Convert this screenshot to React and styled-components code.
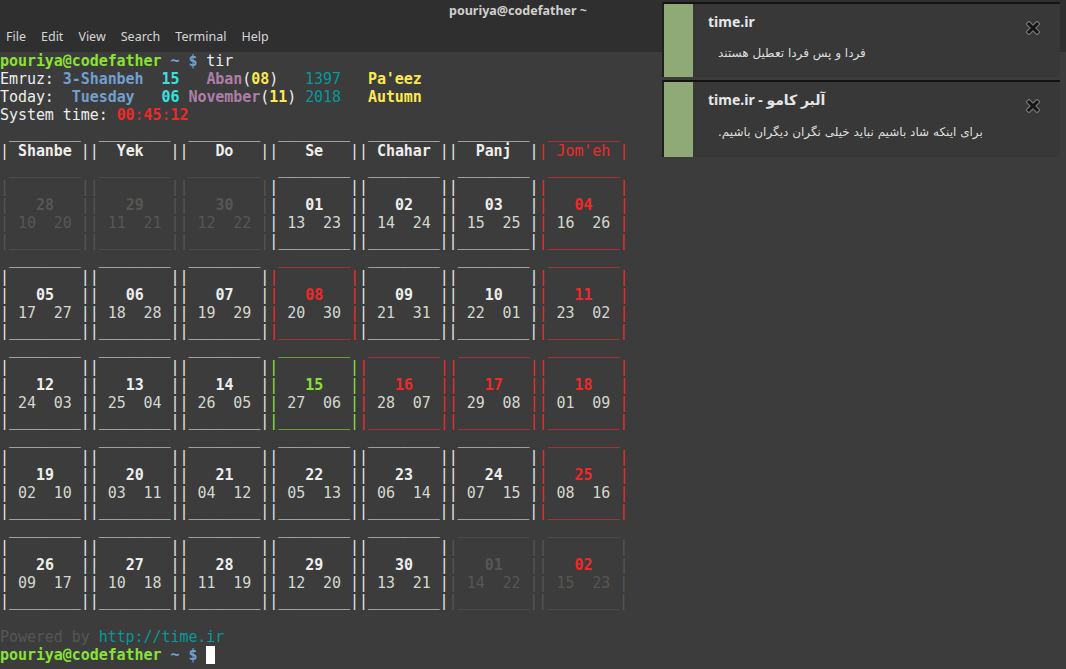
import React from "react";
import styled, { createGlobalStyle } from "styled-components";

const C = {
  fg: "#eeeeec",
  border: "#e6e6e4",
  sub: "#d3d7cf",
  dim: "#555753",
  red: "#ef2929",
  green: "#8ae234",
  blue: "#729fcf",
  cyan: "#34e2e2",
  purple: "#ad7fa8",
  yellow: "#fce94f",
  teal: "#06989a",
};

const GlobalStyle = createGlobalStyle`
  html, body { margin: 0; padding: 0; background: #3c3c3c; overflow: hidden; }
  #root { width: 1066px; height: 669px; }
`;

const Window = styled.div`
  position: relative;
  width: 1066px;
  height: 669px;
  display: flex;
  flex-direction: column;
  background: #3c3c3c;
`;

const TitleBar = styled.div`
  height: 20px;
  background: #2f2f2f;
  display: flex;
  align-items: center;
  justify-content: center;
  padding-right: 30px;
  font-family: "Noto Sans", "Open Sans", sans-serif;
  font-weight: 700;
  font-size: 12.5px;
  color: #cfcfcf;
`;

const MenuBar = styled.div`
  height: 32px;
  background: #2f2f2f;
  display: flex;
  align-items: center;
  gap: 15px;
  padding-left: 6px;
  padding-top: 1px;
  box-sizing: border-box;
  font-family: "Noto Sans", "Open Sans", sans-serif;
  font-size: 12.5px;
  color: #d6d6d6;
`;

const MenuItem = styled.span``;

const Terminal = styled.div`
  flex: 1;
  background: #3c3c3c;
  font-family: "DejaVu Sans Mono", "Liberation Mono", monospace;
  font-size: 15px;
  letter-spacing: -0.06px;
  color: ${C.fg};
`;

const Line = styled.div`
  height: 18px;
  line-height: 18px;
  white-space: pre;
`;

const Seg = styled.span`
  color: ${(p) => p.$c || C.fg};
  font-weight: ${(p) => (p.$b ? 700 : 400)};
`;

const Cursor = styled.span`
  display: inline-block;
  width: 9px;
  height: 18px;
  background: #ffffff;
  vertical-align: top;
`;

const Stack = styled.div`
  position: absolute;
  top: 2px;
  left: 662px;
  width: 398px;
  display: flex;
  flex-direction: column;
  gap: 3px;
`;

const Note = styled.div`
  position: relative;
  display: flex;
  height: ${(p) => p.$h}px;
  box-sizing: border-box;
  background: #383838;
  border-top: 2px solid #131313;
  border-left: 2px solid #1f1f1f;
`;

const Strip = styled.div`
  width: 29px;
  background: #8fa977;
`;

const NoteBody = styled.div`
  flex: 1;
  padding: 8px 0 0 15px;
`;

const NoteTitle = styled.div`
  font-family: "Noto Sans", "DejaVu Sans", sans-serif;
  font-weight: 700;
  font-size: 14px;
  line-height: 20px;
  color: #e6e6e6;
  white-space: pre;
`;

const NoteText = styled.div`
  margin-top: ${(p) => p.$mt}px;
  padding-left: 10px;
  font-family: "DejaVu Sans", "Noto Sans", sans-serif;
  font-size: 12px;
  line-height: 16px;
  color: #dedede;
  direction: rtl;
  text-align: left;
`;

const CloseBtn = styled.div`
  position: absolute;
  right: 20px;
  top: ${(p) => p.$t}px;
  width: 14px;
  height: 14px;
`;

const CloseIcon = () => (
  <svg width="14" height="14" viewBox="0 0 14 14">
    <path d="M3 3L11 11M11 3L3 11" stroke="#777" strokeWidth="5.2" strokeLinecap="square" />
    <path d="M3 3L11 11M11 3L3 11" stroke="#161616" strokeWidth="3" strokeLinecap="square" />
  </svg>
);

// ---------- terminal content ----------
const S = (t, c, b) => ({ t, c, b });

const promptSegs = [S("pouriya@codefather", C.green, true), S(" ~ $", C.blue, true)];

const headers = [
  [" Shanbe ", C.border, C.fg, true],
  ["  Yek   ", C.border, C.fg, true],
  ["   Do   ", C.border, C.fg, true],
  ["   Se   ", C.border, C.fg, true],
  [" Chahar ", C.border, C.fg, true],
  ["  Panj  ", C.border, C.fg, true],
  [" Jom'eh ", C.red, C.red, false],
];

const TYPES = {
  dim: { b: C.dim, n: C.dim, s: C.dim },
  n: { b: C.border, n: C.fg, s: C.sub },
  red: { b: C.red, n: C.red, s: C.sub },
  today: { b: C.green, n: C.green, s: C.sub },
  dimred: { b: C.dim, n: C.red, s: C.dim },
};

const weeks = [
  [["28", "10", "20", "dim"], ["29", "11", "21", "dim"], ["30", "12", "22", "dim"], ["01", "13", "23", "n"], ["02", "14", "24", "n"], ["03", "15", "25", "n"], ["04", "16", "26", "red"]],
  [["05", "17", "27", "n"], ["06", "18", "28", "n"], ["07", "19", "29", "n"], ["08", "20", "30", "red"], ["09", "21", "31", "n"], ["10", "22", "01", "n"], ["11", "23", "02", "red"]],
  [["12", "24", "03", "n"], ["13", "25", "04", "n"], ["14", "26", "05", "n"], ["15", "27", "06", "today"], ["16", "28", "07", "red"], ["17", "29", "08", "red"], ["18", "01", "09", "red"]],
  [["19", "02", "10", "n"], ["20", "03", "11", "n"], ["21", "04", "12", "n"], ["22", "05", "13", "n"], ["23", "06", "14", "n"], ["24", "07", "15", "n"], ["25", "08", "16", "red"]],
  [["26", "09", "17", "n"], ["27", "10", "18", "n"], ["28", "11", "19", "n"], ["29", "12", "20", "n"], ["30", "13", "21", "n"], ["01", "14", "22", "dim"], ["02", "15", "23", "dimred"]],
];

function buildLines() {
  const lines = [];
  lines.push([...promptSegs, S(" tir")]);
  lines.push([
    S("Emruz: "), S("3-Shanbeh", C.blue, true), S("  "), S("15", C.cyan, true), S("   "),
    S("Aban", C.purple, true), S("("), S("08", C.yellow, true), S(")"), S("   "),
    S("1397", C.teal), S("   "), S("Pa'eez", C.yellow, true),
  ]);
  lines.push([
    S("Today:  "), S("Tuesday", C.blue, true), S("   "), S("06", C.cyan, true), S(" "),
    S("November", C.purple, true), S("("), S("11", C.yellow, true), S(")"), S(" "),
    S("2018", C.teal), S("   "), S("Autumn", C.yellow, true),
  ]);
  lines.push([
    S("System time: "), S("00", C.red, true), S(":", C.red), S("45", C.red, true),
    S(":", C.red), S("12", C.red, true),
  ]);
  // header
  lines.push(headers.flatMap(([, b]) => [S(" "), S("________", b), S(" ")]));
  lines.push(headers.flatMap(([name, b, tc, bold]) => [S("|", b), S(name, tc, bold), S("|", b)]));
  // weeks
  weeks.forEach((wk) => {
    lines.push(wk.flatMap((d) => [S(" "), S("________", TYPES[d[3]].b), S(" ")]));
    lines.push(wk.flatMap((d) => { const t = TYPES[d[3]]; return [S("|", t.b), S("        "), S("|", t.b)]; }));
    lines.push(wk.flatMap((d) => { const t = TYPES[d[3]]; return [S("|", t.b), S("   "), S(d[0], t.n, true), S("   "), S("|", t.b)]; }));
    lines.push(wk.flatMap((d) => { const t = TYPES[d[3]]; return [S("|", t.b), S(" " + d[1] + "  " + d[2] + " ", t.s), S("|", t.b)]; }));
    lines.push(wk.flatMap((d) => { const t = TYPES[d[3]]; return [S("|________|", t.b)]; }));
  });
  lines.push([S(" ")]);
  lines.push([S("Powered by ", C.dim), S("http://time.ir", C.teal)]);
  return lines;
}

const termLines = buildLines();

const menu = ["File", "Edit", "View", "Search", "Terminal", "Help"];

export default function App() {
  return (
    <Window>
      <GlobalStyle />
      <TitleBar>pouriya@codefather ~</TitleBar>
      <MenuBar>
        {menu.map((m) => (
          <MenuItem key={m}>{m}</MenuItem>
        ))}
      </MenuBar>
      <Terminal>
        {termLines.map((segs, i) => (
          <Line key={i}>
            {segs.map((s, j) => (
              <Seg key={j} $c={s.c} $b={s.b}>
                {s.t}
              </Seg>
            ))}
          </Line>
        ))}
        <Line>
          {promptSegs.map((s, j) => (
            <Seg key={j} $c={s.c} $b={s.b}>
              {s.t}
            </Seg>
          ))}
          <Seg> </Seg>
          <Cursor />
        </Line>
      </Terminal>
      <Stack>
        <Note $h={75}>
          <Strip />
          <NoteBody>
            <NoteTitle>time.ir</NoteTitle>
            <NoteText $mt={13}>فردا و پس فردا تعطیل هستند</NoteText>
          </NoteBody>
          <CloseBtn $t={17}>
            <CloseIcon />
          </CloseBtn>
        </Note>
        <Note $h={77}>
          <Strip />
          <NoteBody>
            <NoteTitle>time.ir - آلبر کامو</NoteTitle>
            <NoteText $mt={14}>برای اینکه شاد باشیم نباید خیلی نگران دیگران باشیم.</NoteText>
          </NoteBody>
          <CloseBtn $t={17}>
            <CloseIcon />
          </CloseBtn>
        </Note>
      </Stack>
    </Window>
  );
}
